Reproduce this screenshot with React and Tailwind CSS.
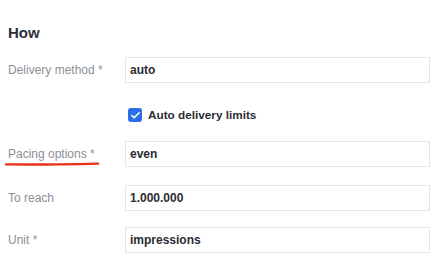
import { Check } from 'lucide-react';

function Row({ label, value, className = '', underline = false }) {
  return (
    <div className={`flex items-center ${className}`}>
      <div className="relative w-[117px] shrink-0 text-[12px] text-[#8b8f97]">
        {label}
        {underline && (
          <svg className="absolute left-[-3px] top-[16px]" width="100" height="6" viewBox="0 0 100 6">
            <path d="M1 3.4 C 30 3.8, 60 3.4, 93 2.6" stroke="#e8321e" strokeWidth="2.4" strokeLinecap="round" fill="none" />
          </svg>
        )}
      </div>
      <div className="h-[26px] w-[305px] border border-[#e6e6e6] bg-white flex items-center pl-[4px] text-[12px] font-bold text-[#2b2d33]">
        {value}
      </div>
    </div>
  );
}

export default function App() {
  return (
    <div className="w-[442px] h-[265px] bg-white px-2 font-['Liberation_Sans',Arial,sans-serif] overflow-hidden">
      <h2 className="pt-[24px] text-[15px] leading-[18px] font-bold text-[#2d2f37]">How</h2>
      <Row label="Delivery method *" value="auto" className="mt-[15px]" />
      <div className="flex items-center mt-[23px] h-[18px] pl-[120px] gap-[6px]">
        <span className="w-[14px] h-[14px] rounded-[3px] bg-[#2b6fe8] flex items-center justify-center">
          <Check size={11} strokeWidth={3.5} className="text-white" />
        </span>
        <span className="text-[11.75px] font-bold text-[#2b2d33]">Auto delivery limits</span>
      </div>
      <Row label="Pacing options *" value="even" className="mt-[17px]" underline />
      <Row label="To reach" value="1.000.000" className="mt-[18px]" />
      <Row label="Unit *" value="impressions" className="mt-[16px]" />
    </div>
  );
}
